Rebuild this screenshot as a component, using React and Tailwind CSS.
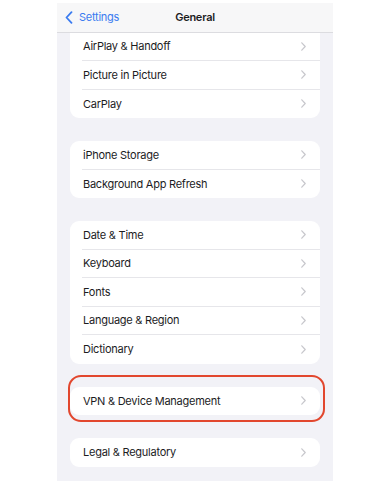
import React from "react";

const groups = [
  ["AirPlay & Handoff", "Picture in Picture", "CarPlay"],
  ["iPhone Storage", "Background App Refresh"],
  ["Date & Time", "Keyboard", "Fonts", "Language & Region", "Dictionary"],
  ["VPN & Device Management"],
  ["Legal & Regulatory"],
];

const Chevron = () => (
  <svg width="5" height="9" viewBox="0 0 5 9" fill="none" className="shrink-0">
    <path d="M0.8 0.8L4.2 4.5L0.8 8.2" stroke="#c7c7cc" strokeWidth="1.2" strokeLinecap="round" strokeLinejoin="round" />
  </svg>
);

const Row = ({ label, last }) => (
  <div className="flex h-[28.5px] pl-[12px]">
    <div className={`flex flex-1 items-center pr-[14px] pl-[1px] ${last ? "" : "border-b border-[#e6e6ea]"}`}>
      <span className="flex-1 text-[11px] tracking-[-0.25px] text-[#1c1c1e]">{label}</span>
      <Chevron />
    </div>
  </div>
);

const Card = ({ items, first, highlight }) => (
  <div className={`relative bg-white ${first ? "rounded-b-[9px]" : "rounded-[9px]"}`}>
    {items.map((label, i) => (
      <Row key={label} label={label} last={i === items.length - 1} />
    ))}
    {highlight && (
      <div className="pointer-events-none absolute -top-[12px] -left-[2px] -right-[5px] -bottom-[7px] rounded-[13px] border-2 border-[#e2472e]" />
    )}
  </div>
);

export default function App() {
  return (
    <div className="h-[484px] w-full bg-white pt-[3px]" style={{ fontFamily: "Inter, 'Liberation Sans', sans-serif" }}>
      <div className="ml-[57px] flex h-[478px] w-[276px] flex-col overflow-hidden bg-[#f2f2f7]">
        <div className="relative flex h-[29.5px] shrink-0 items-center border-b border-[#dcdce0] bg-[#f7f7f8]">
          <div className="flex items-center pl-[8px]">
            <svg width="8" height="13" viewBox="0 0 8 13" fill="none">
              <path d="M6.5 1.2L1.5 6.5L6.5 11.8" stroke="#3a7bf0" strokeWidth="1.8" strokeLinecap="round" strokeLinejoin="round" />
            </svg>
            <span className="ml-[6px] text-[11px] tracking-[-0.25px] text-[#3a7bf0]">Settings</span>
          </div>
          <span className="absolute left-1/2 -translate-x-1/2 text-[11px] font-semibold tracking-[-0.25px] text-[#1c1c1e]">General</span>
        </div>
        <div className="flex flex-col gap-[23px] px-[13px]">
          {groups.map((items, i) => (
            <Card key={i} items={items} first={i === 0} highlight={i === 3} />
          ))}
        </div>
      </div>
    </div>
  );
}
